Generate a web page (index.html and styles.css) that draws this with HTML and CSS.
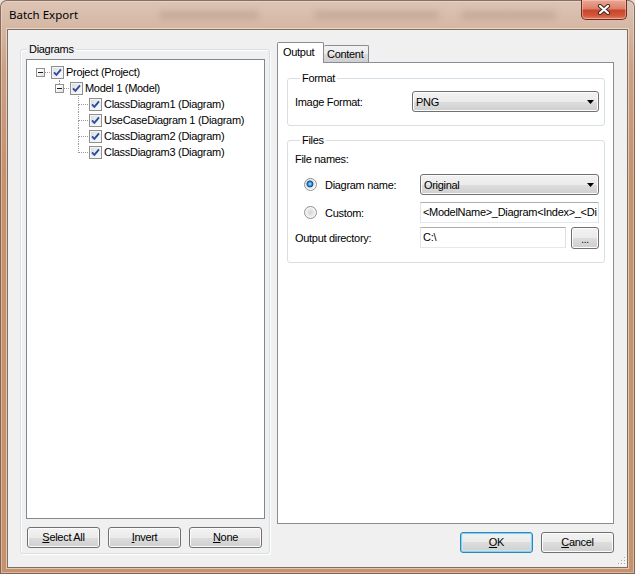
FILE: index.html
```html
<!DOCTYPE html>
<html>
<head>
<meta charset="utf-8">
<link rel="stylesheet" href="styles.css">
</head>
<body>
<div class="window">
  <div class="titlebar">
    <span class="title">Batch Export</span>
    <span class="blob b1"></span>
    <span class="blob b2"></span>
    <span class="blob b3"></span>
    <span class="close"><svg width="14" height="11" viewBox="0 0 14 11"><path d="M3 2 L11 9 M11 2 L3 9" stroke="#3e2a24" stroke-width="4.2" stroke-linecap="round" fill="none"/><path d="M3 2 L11 9 M11 2 L3 9" stroke="#ffffff" stroke-width="2.2" stroke-linecap="round" fill="none"/></svg></span>
  </div>
  <div class="client">
    <div class="group diagrams">
      <div class="glabel">Diagrams</div>
      <div class="tree">
        <div class="row">
          <span class="exp"><span class="bcol"><span class="vtop off"></span><span class="box"><span class="minus"></span></span></span><span class="hl"></span></span>
          <span class="chk"><svg width="11" height="11" viewBox="0 0 11 11"><path d="M2 5.3 L4.4 7.8 L9 2.4" stroke="#2f4aa3" stroke-width="1.9" fill="none"/></svg></span>
          <span class="txt">Project (Project)</span>
        </div>
        <div class="row">
          <span class="ind"></span>
          <span class="exp"><span class="bcol"><span class="vtop"></span><span class="box"><span class="minus"></span></span></span><span class="hl"></span></span>
          <span class="chk"><svg width="11" height="11" viewBox="0 0 11 11"><path d="M2 5.3 L4.4 7.8 L9 2.4" stroke="#2f4aa3" stroke-width="1.9" fill="none"/></svg></span>
          <span class="txt">Model 1 (Model)</span>
        </div>
        <div class="row">
          <span class="ind"></span><span class="ind"></span>
          <span class="conn"><span></span><span class="c2"></span><span></span><span class="c4"></span></span>
          <span class="chk"><svg width="11" height="11" viewBox="0 0 11 11"><path d="M2 5.3 L4.4 7.8 L9 2.4" stroke="#2f4aa3" stroke-width="1.9" fill="none"/></svg></span>
          <span class="txt">ClassDiagram1 (Diagram)</span>
        </div>
        <div class="row">
          <span class="ind"></span><span class="ind"></span>
          <span class="conn"><span></span><span class="c2"></span><span></span><span class="c4"></span></span>
          <span class="chk"><svg width="11" height="11" viewBox="0 0 11 11"><path d="M2 5.3 L4.4 7.8 L9 2.4" stroke="#2f4aa3" stroke-width="1.9" fill="none"/></svg></span>
          <span class="txt">UseCaseDiagram 1 (Diagram)</span>
        </div>
        <div class="row">
          <span class="ind"></span><span class="ind"></span>
          <span class="conn"><span></span><span class="c2"></span><span></span><span class="c4"></span></span>
          <span class="chk"><svg width="11" height="11" viewBox="0 0 11 11"><path d="M2 5.3 L4.4 7.8 L9 2.4" stroke="#2f4aa3" stroke-width="1.9" fill="none"/></svg></span>
          <span class="txt">ClassDiagram2 (Diagram)</span>
        </div>
        <div class="row">
          <span class="ind"></span><span class="ind"></span>
          <span class="conn"><span></span><span class="c2"></span><span></span><span></span></span>
          <span class="chk"><svg width="11" height="11" viewBox="0 0 11 11"><path d="M2 5.3 L4.4 7.8 L9 2.4" stroke="#2f4aa3" stroke-width="1.9" fill="none"/></svg></span>
          <span class="txt">ClassDiagram3 (Diagram)</span>
        </div>
      </div>
      <div class="gbtns">
        <button class="btn"><u>S</u>elect All</button>
        <button class="btn"><u>I</u>nvert</button>
        <button class="btn"><u>N</u>one</button>
      </div>
    </div>

    <div class="right">
      <div class="tabs">
        <div class="tab sel">Output</div>
        <div class="tab">Content</div>
      </div>
      <div class="panel">
        <div class="group format">
          <div class="glabel wlabel">Format</div>
          <div class="frow">
            <span class="lbl lbl1">Image Format:</span>
            <div class="combo combo1"><span>PNG</span><svg class="arrow" width="7" height="4" viewBox="0 0 7 4"><path d="M0 0 H7 L3.5 4 Z" fill="#000"/></svg></div>
          </div>
        </div>
        <div class="group files">
          <div class="glabel wlabel">Files</div>
          <div class="fnames">File names:</div>
          <div class="frow rrow r1">
            <span class="radio on"></span>
            <span class="rlbl">Diagram name:</span>
            <div class="combo combo2"><span>Original</span><svg class="arrow" width="7" height="4" viewBox="0 0 7 4"><path d="M0 0 H7 L3.5 4 Z" fill="#000"/></svg></div>
          </div>
          <div class="frow rrow r2">
            <span class="radio"></span>
            <span class="rlbl">Custom:</span>
            <div class="field field1">&lt;ModelName&gt;_Diagram&lt;Index&gt;_&lt;Di</div>
          </div>
          <div class="frow r3">
            <span class="lbl lbl3">Output directory:</span>
            <div class="field field2">C:\</div>
            <button class="btn browse">...</button>
          </div>
        </div>
      </div>
      <div class="dlgbtns">
        <button class="btn default"><u>O</u>K</button>
        <button class="btn"><u>C</u>ancel</button>
      </div>
    </div>

    <div class="grip"><svg width="9" height="9" viewBox="0 0 9 9">
      <rect x="7" y="1" width="1" height="1" fill="#a8a8a8"/><rect x="8" y="2" width="1" height="1" fill="#fff"/>
      <rect x="4" y="4" width="1" height="1" fill="#a8a8a8"/><rect x="5" y="5" width="1" height="1" fill="#fff"/>
      <rect x="7" y="4" width="1" height="1" fill="#a8a8a8"/><rect x="8" y="5" width="1" height="1" fill="#fff"/>
      <rect x="1" y="7" width="1" height="1" fill="#a8a8a8"/><rect x="2" y="8" width="1" height="1" fill="#fff"/>
      <rect x="4" y="7" width="1" height="1" fill="#a8a8a8"/><rect x="5" y="8" width="1" height="1" fill="#fff"/>
      <rect x="7" y="7" width="1" height="1" fill="#a8a8a8"/><rect x="8" y="8" width="1" height="1" fill="#fff"/>
    </svg></div>
  </div>
</div>
</body>
</html>
```
FILE: styles.css
```css
* { box-sizing: border-box; }
html, body { margin: 0; padding: 0; }
body {
  width: 635px;
  height: 574px;
  overflow: hidden;
  background: #eadfd8;
  font-family: "Liberation Sans", Arial, sans-serif;
  font-size: 11px;
  letter-spacing: -0.3px;
  color: #000;
}
.window {
  width: 635px;
  height: 574px;
  border-radius: 7px 7px 0 0;
  background: linear-gradient(to bottom, #dcc5b6 0px, #d5b7a3 28px, #cba084 70px, #c4926f 180px, #c4926f 100%);
  box-shadow: inset 0 0 0 1px rgba(70, 45, 30, 0.6), inset 0 0 0 2px rgba(250, 228, 214, 0.45);
  display: flex;
  flex-direction: column;
  padding: 0 7px 6px 7px;
}
.titlebar {
  height: 29px;
  display: flex;
  align-items: flex-start;
}
.title {
  font-family: "Noto Sans", "Open Sans", sans-serif;
  font-size: 11.5px;
  letter-spacing: 0;
  line-height: 17px;
  margin-top: 6px;
  margin-left: 2px;
  width: 80px;
  color: #000;
  white-space: nowrap;
}
.blob {
  height: 8px;
  margin-top: 11px;
  border-radius: 5px;
  background: rgba(95, 60, 42, 0.14);
  filter: blur(3px);
}
.b1 { width: 100px; margin-left: 70px; }
.b2 { width: 125px; margin-left: 55px; }
.b3 { width: 95px; margin-left: 22px; }
.close {
  margin-left: auto;
  margin-right: 1px;
  width: 46px;
  height: 20px;
  border: 1px solid #6a3026;
  border-top: none;
  border-radius: 0 0 5px 5px;
  background: linear-gradient(to bottom, #e9a996 0%, #de7f68 45%, #c8462c 55%, #d6593c 85%, #e7876a 100%);
  box-shadow: inset 0 0 0 1px rgba(255, 210, 195, 0.45);
  display: flex;
  align-items: center;
  justify-content: center;
}
.client {
  position: relative;
  height: 539px;
  border: 1px solid #7e6f66;
  box-shadow: 0 0 0 1px rgba(255, 238, 226, 0.55);
  background: #f0f0f0;
  display: flex;
  align-items: flex-start;
  padding: 0 13px 0 12px;
}
.group {
  border: 1px solid #d5dfe5;
  border-radius: 3px;
  box-shadow: inset 1px 1px 0 #ffffff, 1px 1px 0 #ffffff;
}
.glabel {
  margin-top: -7px;
  margin-left: 6px;
  padding: 0 2px;
  height: 13px;
  line-height: 13px;
  width: fit-content;
  background: #f0f0f0;
}
.wlabel { background: #ffffff; margin-left: 5px; }
.diagrams {
  width: 250px;
  margin-top: 19px;
}
.tree {
  margin: 3px 4px 0 5px;
  height: 460px;
  border: 1px solid #828790;
  background: #ffffff;
  padding: 4px 0 0 4px;
}
.row {
  height: 16px;
  display: flex;
  align-items: center;
}
.ind { width: 19px; height: 16px; flex: none; }
.exp {
  width: 19px;
  height: 16px;
  flex: none;
  display: flex;
  align-items: flex-start;
  padding-left: 5px;
}
.bcol { width: 9px; display: flex; flex-direction: column; }
.vtop { height: 4px; margin-left: 4px; border-left: 1px dotted #9a9a9a; }
.vtop.off { border-left-color: transparent; }
.box {
  width: 9px;
  height: 9px;
  border: 1px solid #919191;
  background: linear-gradient(135deg, #ffffff 30%, #dedede 100%);
  display: flex;
  align-items: center;
  justify-content: center;
}
.minus { width: 5px; height: 1px; background: #1a1a1a; }
.hl { width: 5px; margin-top: 8px; border-top: 1px dotted #9a9a9a; }
.conn {
  width: 19px;
  height: 16px;
  flex: none;
  display: grid;
  grid-template-columns: 9px 10px;
  grid-template-rows: 9px 7px;
}
.conn .c2 { border-left: 1px dotted #9a9a9a; border-bottom: 1px dotted #9a9a9a; }
.conn .c4 { border-left: 1px dotted #9a9a9a; }
.chk {
  width: 13px;
  height: 13px;
  flex: none;
  margin-left: 1px;
  border: 1px solid #8e8f8f;
  background: linear-gradient(135deg, #d9dbde 0%, #f0f1f2 60%, #fdfdfd 100%);
  box-shadow: inset 0 0 0 1px #f4f4f4;
  display: flex;
}
.chk svg { display: block; }
.txt {
  margin-left: 2px;
  white-space: nowrap;
  line-height: 13px;
}
.gbtns {
  display: flex;
  gap: 8px;
  margin: 8px 0 5px 6px;
}
.btn {
  font: inherit;
  letter-spacing: -0.3px;
  color: #000;
  padding: 0;
  width: 73px;
  height: 21px;
  border: 1px solid #707070;
  border-radius: 3px;
  background: linear-gradient(to bottom, #f2f2f2 0%, #ebebeb 50%, #dddddd 50%, #cfcfcf 100%);
  box-shadow: inset 0 0 0 1px #fcfcfc;
  text-align: center;
  line-height: 19px;
}
.btn u { text-decoration: underline; }
.right {
  margin-left: 7px;
  width: 337px;
  margin-top: 12px;
  display: flex;
  flex-direction: column;
}
.tabs {
  height: 20px;
  display: flex;
  align-items: flex-end;
}
.tab {
  height: 17px;
  width: 45px;
  border: 1px solid #898c95;
  border-bottom: none;
  border-left: none;
  background: linear-gradient(to bottom, #f3f3f3 0%, #ebebeb 50%, #dddddd 50%, #cfcfcf 100%);
  padding-left: 3px;
  line-height: 16px;
  border-radius: 2px 2px 0 0;
}
.tab.sel {
  position: relative;
  z-index: 1;
  height: 21px;
  width: 47px;
  margin-bottom: -1px;
  border-left: 1px solid #898c95;
  background: #ffffff;
  padding-left: 5px;
  line-height: 19px;
}
.panel {
  height: 462px;
  border: 1px solid #898c95;
  background: #ffffff;
  padding: 15px 8px 0 9px;
}
.format { padding: 0 5px 13px 7px; }
.files { margin-top: 14px; padding: 0 5px 14px 7px; }
.frow {
  height: 21px;
  display: flex;
  align-items: center;
}
.format .frow { margin-top: 6px; }
.lbl1 { width: 117px; }
.lbl3 { width: 125px; }
.combo {
  height: 21px;
  border: 1px solid #707070;
  border-radius: 3px;
  background: linear-gradient(to bottom, #f2f2f2 0%, #ebebeb 50%, #dddddd 50%, #cfcfcf 100%);
  box-shadow: inset 0 0 0 1px #fcfcfc;
  display: flex;
  align-items: center;
  padding: 0 4px 0 3px;
}
.combo .arrow { margin-left: auto; }
.combo1 { width: 187px; }
.combo2 { width: 179px; }
.fnames {
  margin-top: 6px;
  height: 13px;
  line-height: 13px;
}
.r1 { margin-top: 8px; }
.r2 { margin-top: 7px; }
.r3 { margin-top: 4px; }
.radio {
  width: 13px;
  height: 13px;
  flex: none;
  margin-left: 9px;
  border-radius: 50%;
  border: 1px solid #8e8f8f;
  background: radial-gradient(circle at 50% 50%, #d6d6d6 0px, #e6e6e6 3px, #f6f6f6 5px, #ffffff 6px);
}
.radio.on {
  background: radial-gradient(circle at 45% 45%, #c4ecff 0px, #4fb2ee 1.3px, #1b6bb8 2.4px, #0d4a8c 3.2px, #dadada 3.7px, #ececec 4.5px, #fbfbfb 5.5px);
}
.rlbl { margin-left: 8px; width: 95px; }
.field {
  height: 21px;
  border: 1px solid #e3e9ef;
  border-top-color: #abadb3;
  border-left-color: #e2e3ea;
  border-right-color: #dbdfe6;
  background: #ffffff;
  padding-left: 2px;
  line-height: 19px;
  white-space: nowrap;
  overflow: hidden;
}
.field1 { width: 179px; }
.field2 { width: 146px; }
.browse { width: 28px; height: 22px; margin-left: 5px; align-self: flex-start; line-height: 24px; font-size: 10px; }
.dlgbtns {
  display: flex;
  justify-content: flex-end;
  gap: 8px;
  margin-top: 8px;
}
.btn.default {
  border-color: #3c7fb1;
  box-shadow: inset 0 0 0 1px #78d6f8, inset 0 0 0 2px rgba(200, 240, 255, 0.5);
}
.grip {
  position: absolute;
  right: 1px;
  bottom: 2px;
  width: 9px;
  height: 9px;
  display: flex;
}
```
